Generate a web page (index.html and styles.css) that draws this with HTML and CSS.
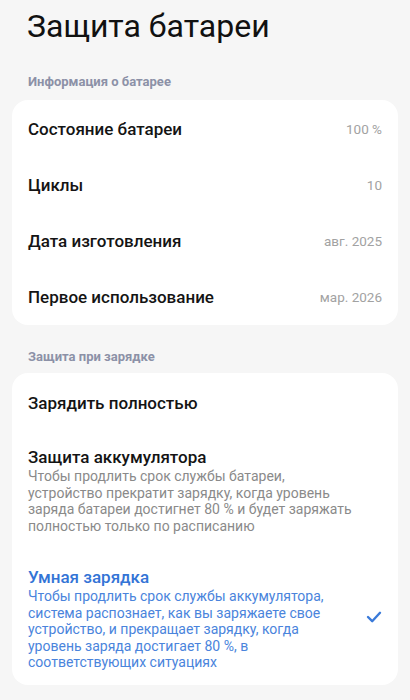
FILE: index.html
```html
<!DOCTYPE html>
<html lang="ru">
<head>
<meta charset="utf-8">
<title>Защита батареи</title>
<link rel="stylesheet" href="styles.css">
</head>
<body>
<div class="page">
  <h1 class="title">Защита батареи</h1>

  <div class="section-label">Информация о батарее</div>
  <div class="card info-card">
    <div class="info-row"><span class="info-label">Состояние батареи</span><span class="info-value">100 %</span></div>
    <div class="info-row"><span class="info-label">Циклы</span><span class="info-value">10</span></div>
    <div class="info-row"><span class="info-label">Дата изготовления</span><span class="info-value">авг. 2025</span></div>
    <div class="info-row"><span class="info-label">Первое использование</span><span class="info-value">мар. 2026</span></div>
  </div>

  <div class="section-label section-label--second">Защита при зарядке</div>
  <div class="card options-card">
    <div class="option option--full">
      <div class="option-text">
        <div class="option-title">Зарядить полностью</div>
      </div>
      <svg class="check" width="16" height="14" viewBox="0 0 16 14" aria-hidden="true">
        <polyline points="2,6 6.2,10.2 14,1.8" fill="none" stroke="currentColor" stroke-width="2.4" stroke-linecap="round" stroke-linejoin="round"/>
      </svg>
    </div>
    <div class="option option--protect">
      <div class="option-text">
        <div class="option-title">Защита аккумулятора</div>
        <div class="option-desc">Чтобы продлить срок службы батареи, устройство прекратит зарядку, когда уровень заряда батареи достигнет 80 % и будет заряжать полностью только по расписанию</div>
      </div>
      <svg class="check" width="16" height="14" viewBox="0 0 16 14" aria-hidden="true">
        <polyline points="2,6 6.2,10.2 14,1.8" fill="none" stroke="currentColor" stroke-width="2.4" stroke-linecap="round" stroke-linejoin="round"/>
      </svg>
    </div>
    <div class="option option--smart option--selected">
      <div class="option-text">
        <div class="option-title">Умная зарядка</div>
        <div class="option-desc">Чтобы продлить срок службы аккумулятора, система распознает, как вы заряжаете свое устройство, и прекращает зарядку, когда уровень заряда достигает 80 %, в соответствующих ситуациях</div>
      </div>
      <svg class="check" width="16" height="14" viewBox="0 0 16 14" aria-hidden="true">
        <polyline points="2,6 6.2,10.2 14,1.8" fill="none" stroke="currentColor" stroke-width="2.4" stroke-linecap="round" stroke-linejoin="round"/>
      </svg>
    </div>
  </div>
</div>
</body>
</html>
```

FILE: styles.css
```css
* {
  box-sizing: border-box;
}

html, body {
  margin: 0;
  padding: 0;
}

body {
  background: #f6f6f6;
  font-family: Roboto, "Noto Sans", "Liberation Sans", sans-serif;
  color: #111;
}

.page {
  width: 410px;
  height: 700px;
  overflow: hidden;
}

.title {
  margin: 0;
  padding: 6px 27px 0;
  font-size: 32px;
  line-height: 40px;
  font-weight: 400;
  color: #111;
}

.section-label {
  margin: 28px 0 10px;
  padding: 0 28px;
  font-size: 13px;
  line-height: 16px;
  font-weight: 700;
  color: #8c91a7;
}

.section-label--second {
  margin-top: 24px;
  margin-bottom: 8px;
}

.card {
  margin: 0 12px;
  background: #ffffff;
  border-radius: 16px;
}

.info-card {
  padding: 1px 16px 0;
}

.info-row {
  height: 56px;
  display: flex;
  align-items: center;
  justify-content: space-between;
}

.info-label {
  font-size: 17px;
  font-weight: 500;
  color: #141414;
}

.info-value {
  font-size: 13.5px;
  color: #a2a2a2;
}

.options-card {
  padding: 0;
}

.option {
  display: flex;
  align-items: center;
  gap: 14px;
  padding: 16px 16px;
}

.option--full {
  padding-top: 19px;
  padding-bottom: 19px;
}

.option--protect {
  padding-top: 13px;
  padding-bottom: 16px;
}

.option--smart {
  padding-top: 16px;
  padding-bottom: 14px;
}

.option-text {
  flex: 1;
  min-width: 0;
}

.option-title {
  font-size: 17px;
  line-height: 22px;
  font-weight: 500;
  color: #141414;
}

.option-desc {
  font-size: 14px;
  line-height: 16.5px;
  color: #8a8a8a;
}

.option--selected .option-title {
  color: #3374d6;
}

.option--selected .option-desc {
  color: #4a84dc;
}

.check {
  flex: none;
  display: block;
  color: #3a7ad9;
  visibility: hidden;
}

.option--selected .check {
  visibility: visible;
}
```
